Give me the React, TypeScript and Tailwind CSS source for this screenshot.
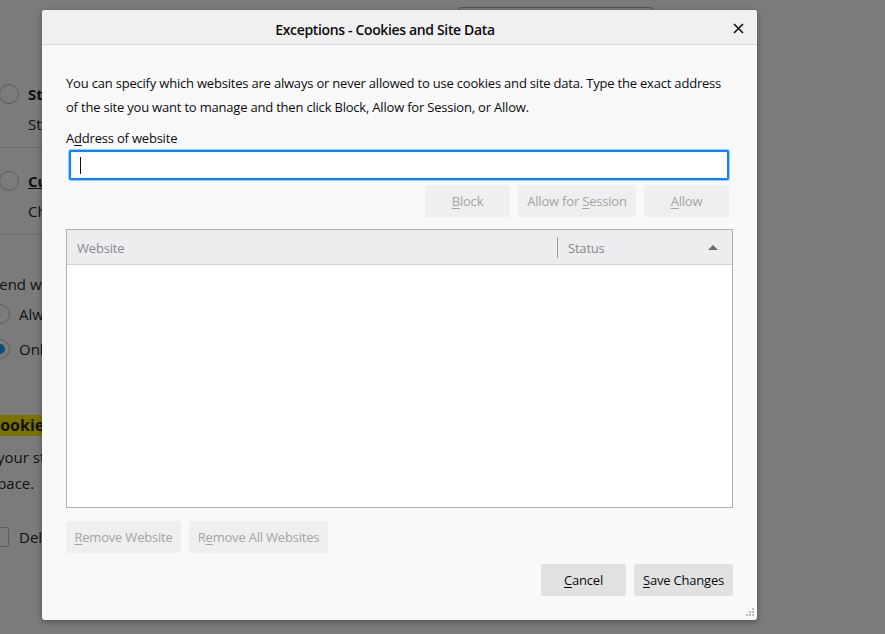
import React from 'react';

const font = "font-['Open_Sans',_'Noto_Sans',_sans-serif]";

function Key({ children }: { children: React.ReactNode }) {
  return <span className="underline underline-offset-2">{children}</span>;
}

function Radio({ checked = false }: { checked?: boolean }) {
  return (
    <span className="flex h-[20px] w-[20px] shrink-0 items-center justify-center rounded-full border border-[#5c5c5c]">
      {checked && <span className="h-[10px] w-[10px] rounded-full bg-[#0c4d7d]" />}
    </span>
  );
}

function BackgroundPage() {
  return (
    <div className="flex flex-col text-[15px] text-[#111]">
      <div className="ml-[458px] mt-[7px] h-[40px] w-[195px] rounded-[3px] border border-[#565656]" />
      <div className="-ml-[1px] mt-[36px] flex items-center gap-[9px]">
        <Radio />
        <span className="font-bold">Standard</span>
      </div>
      <div className="ml-[28px] mt-[7px]">Standard settings</div>
      <div className="mt-[12px] h-px w-[300px] bg-[#6c6c6c]" />
      <div className="-ml-[1px] mt-[22px] flex items-center gap-[9px]">
        <Radio />
        <span className="font-bold underline">Custom</span>
      </div>
      <div className="ml-[28px] mt-[7px]">Choose what</div>
      <div className="mt-[12px] h-px w-[300px] bg-[#6c6c6c]" />
      <div className="-ml-[9px] mt-[38px]">Send websites</div>
      <div className="-ml-[10px] mt-[7px] flex items-center gap-[9px]">
        <Radio />
        <span>Always</span>
      </div>
      <div className="-ml-[10px] mt-[13px] flex items-center gap-[9px]">
        <Radio checked />
        <span>Only</span>
      </div>
      <div className="-ml-[18px] mt-[54px] w-[70px] bg-[#7a7300] pl-[8px] text-[16px] font-bold leading-[21px]">Cookies</div>
      <div className="-ml-[3px] mt-[10px]">your storage</div>
      <div className="-ml-[10px] mt-[4px]">space.</div>
      <div className="-ml-[11px] mt-[31px] flex items-center gap-[10px]">
        <span className="h-[20px] w-[20px] rounded-[2px] border border-[#5c5c5c]" />
        <span>Delete</span>
      </div>
    </div>
  );
}

function SmallButton({ children, w, dim = true }: { children: React.ReactNode; w: string; dim?: boolean }) {
  return (
    <div
      className={`flex h-[32px] items-center justify-center rounded-[2px] pt-[2px] text-[13px] tracking-[-0.2px] ${w} ${
        dim ? 'bg-[#efeff0] text-[#a4a4a6]' : 'bg-[#e1e1e2] text-[#0c0c0d]'
      }`}
    >
      <span>{children}</span>
    </div>
  );
}

export default function App() {
  return (
    <div className={`relative h-[634px] w-[885px] overflow-hidden bg-[#7b7b7b] ${font}`}>
      <BackgroundPage />

      <div className="absolute left-[42px] top-[10px] flex h-[610px] w-[715px] flex-col rounded-[3px] bg-[#f9f9fa] shadow-[0_2px_6px_rgba(0,0,0,0.35)]">
        <div className="relative flex h-[35px] shrink-0 items-center justify-center rounded-t-[3px] border-b border-[#d7d7db] bg-[#f0f0f0] pr-[29px] pt-[4px]">
          <span className="text-[14px] font-semibold tracking-[-0.35px] text-[#0c0c0d]">Exceptions - Cookies and Site Data</span>
          <svg className="absolute right-[13px] top-[13px]" width="11" height="11" viewBox="0 0 11 11">
            <path d="M1 1L10 10M10 1L1 10" stroke="#111" strokeWidth="1.6" />
          </svg>
        </div>

        <div className="flex flex-1 flex-col px-[24px] text-[13px] tracking-[-0.2px] text-[#0c0c0d]">
          <p className="mt-[26px] whitespace-nowrap leading-[24px]">
            You can specify which websites are always or never allowed to use cookies and site data. Type the exact address
            <br />
            of the site you want to manage and then click Block, Allow for Session, or Allow.
          </p>
          <label className="mt-[9px] leading-[20px]">
            A<Key>d</Key>dress of website
          </label>
          <div className="ml-[3px] mt-[2px] flex h-[30px] w-[660px] items-center rounded-[2px] border-2 border-[#0a84ff] bg-white pl-[9px] shadow-[0_0_0_1px_#9dcafc]">
            <span className="h-[17px] w-px bg-[#111]" />
          </div>

          <div className="mr-[4px] mt-[5px] flex justify-end gap-[8px]">
            <SmallButton w="w-[85px]">
              <Key>B</Key>lock
            </SmallButton>
            <SmallButton w="w-[118px]">
              Allow for <Key>S</Key>ession
            </SmallButton>
            <SmallButton w="w-[85px]">
              <Key>A</Key>llow
            </SmallButton>
          </div>

          <div className="mt-[12px] flex h-[279px] flex-col border border-[#b1b1b3] bg-white">
            <div className="flex h-[35px] shrink-0 items-center border-b border-[#d2d2d4] bg-[#ededf0] text-[#8a8a8c]">
              <div className="w-[490px] pl-[10px] pt-[3px]">Website</div>
              <div className="h-[21px] w-px bg-[#9d9d9f]" />
              <div className="flex flex-1 items-center justify-between pl-[10px] pr-[14px]">
                <span className="pt-[3px]">Status</span>
                <svg width="10" height="5" viewBox="0 0 10 5">
                  <path d="M0 5L5 0L10 5Z" fill="#6d6d6f" />
                </svg>
              </div>
            </div>
          </div>

          <div className="mt-[13px] flex gap-[8px]">
            <SmallButton w="w-[115px]">
              <Key>R</Key>emove Website
            </SmallButton>
            <SmallButton w="w-[139px]">
              R<Key>e</Key>move All Websites
            </SmallButton>
          </div>

          <div className="mt-[11px] flex justify-end gap-[8px]">
            <SmallButton w="w-[85px]" dim={false}>
              <Key>C</Key>ancel
            </SmallButton>
            <SmallButton w="w-[99px]" dim={false}>
              <Key>S</Key>ave Changes
            </SmallButton>
          </div>

          <div className="mt-auto mb-[3px] -mr-[22px] flex justify-end">
            <svg width="9" height="9" viewBox="0 0 9 9">
              <rect x="6" y="0" width="2" height="2" fill="#bdbdbd" />
              <rect x="3" y="3" width="2" height="2" fill="#bdbdbd" />
              <rect x="6" y="3" width="2" height="2" fill="#bdbdbd" />
              <rect x="0" y="6" width="2" height="2" fill="#bdbdbd" />
              <rect x="3" y="6" width="2" height="2" fill="#bdbdbd" />
              <rect x="6" y="6" width="2" height="2" fill="#bdbdbd" />
            </svg>
          </div>
        </div>
      </div>
    </div>
  );
}
